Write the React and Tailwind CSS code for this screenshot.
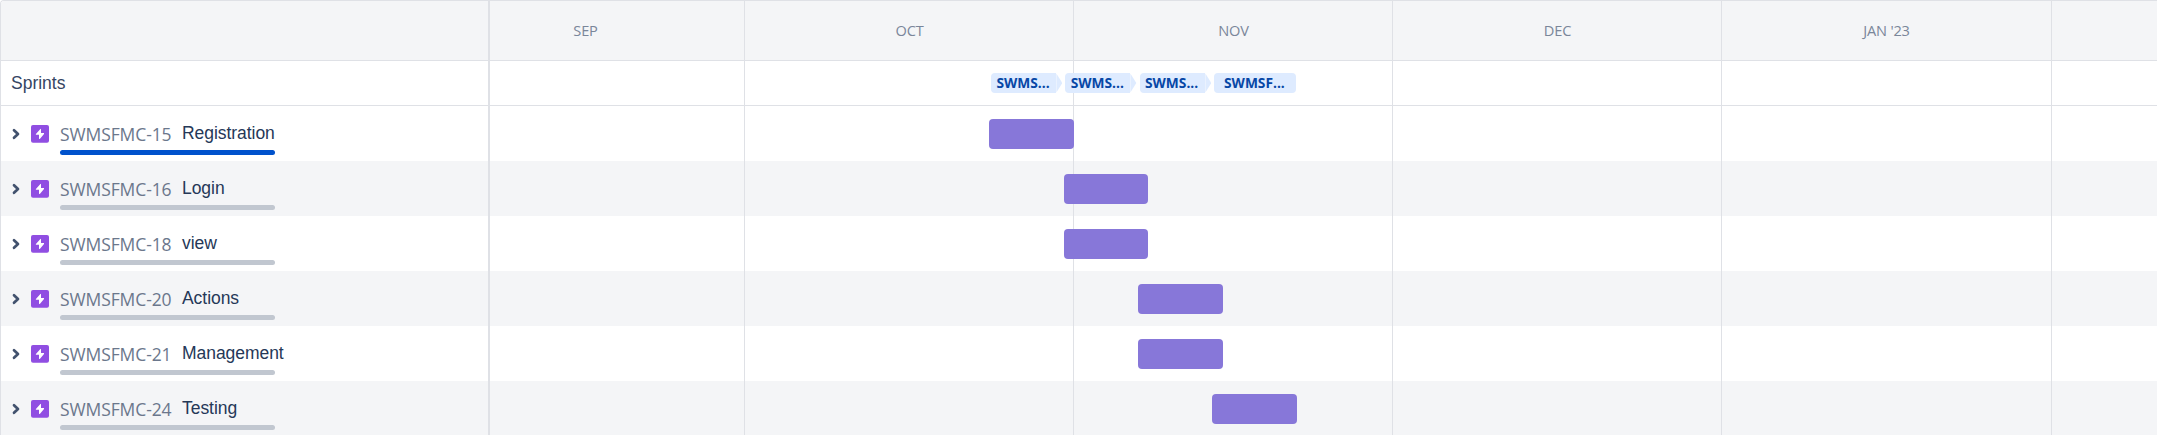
const months = [
  { label: "SEP", cell: "w-[254px]", pad: "pr-[63px]", line: "" },
  { label: "OCT", cell: "w-[329px]", pad: "pl-[2px]", line: "border-l" },
  { label: "NOV", cell: "w-[319px]", pad: "pl-[2px]", line: "border-l" },
  { label: "DEC", cell: "w-[329px]", pad: "pl-[2px]", line: "border-l" },
  { label: "JAN '23", cell: "w-[330px]", pad: "pl-[1px] tracking-[0px]", line: "border-l" },
  { label: "", cell: "w-[106px]", pad: "", line: "border-l" },
];

const epics = [
  { id: "SWMSFMC-15", name: "Registration", offset: "ml-[499.4px]", progress: "bg-[#0052CC]" },
  { id: "SWMSFMC-16", name: "Login", offset: "ml-[573.7px]", progress: "bg-[#C1C7D0]" },
  { id: "SWMSFMC-18", name: "view", offset: "ml-[573.7px]", progress: "bg-[#C1C7D0]" },
  { id: "SWMSFMC-20", name: "Actions", offset: "ml-[648px]", progress: "bg-[#C1C7D0]" },
  { id: "SWMSFMC-21", name: "Management", offset: "ml-[648px]", progress: "bg-[#C1C7D0]" },
  { id: "SWMSFMC-24", name: "Testing", offset: "ml-[722.3px]", progress: "bg-[#C1C7D0]" },
];

const sans = "font-['Liberation_Sans',Arial,sans-serif]";
const humanist = "font-['Open_Sans','Noto_Sans',sans-serif]";

function Chevron() {
  return (
    <svg className="mt-[22px] h-[12px] w-[8px] shrink-0" viewBox="0 0 8 12" fill="none" stroke="#42526E" strokeWidth="2.7" strokeLinecap="round" strokeLinejoin="round">
      <path d="M2 2.2 L6 6 L2 9.8" />
    </svg>
  );
}

function EpicIcon() {
  return (
    <svg className="mt-[19px] ml-[11px] h-[18px] w-[18px] shrink-0" viewBox="0 0 18 18">
      <rect width="18" height="17.7" rx="2" fill="#904EE2" />
      <path d="M9.4 4 L4.9 8.9 Q4.6 9.7 5.3 9.8 H8 V13.6 Q8.2 14.4 8.8 13.9 L13 9 Q13.3 8.2 12.7 8.1 H10 V4.3 Q9.9 3.6 9.4 4 Z" fill="#fff" />
    </svg>
  );
}

function Sprint({ label, last }) {
  if (last) {
    return (
      <div className={`${humanist} flex h-5 w-[82px] items-center justify-center rounded bg-[#DEEBFF] pr-px text-[13.75px] font-bold tracking-[0px] text-[#0747A6]`}>
        {label}
      </div>
    );
  }
  return (
    <div className="mr-[3px] flex h-5">
      <div className={`${humanist} flex w-[65px] items-center justify-center rounded-l bg-[#DEEBFF] pr-px text-[13.75px] font-bold tracking-[0px] text-[#0747A6]`}>
        {label}
      </div>
      <svg className="h-5 w-[6.3px]" viewBox="0 0 6.3 20">
        <path d="M0.4 0.6 L6.3 10 L0.4 19.4 Z" fill="#DEEBFF" />
      </svg>
    </div>
  );
}

export default function App() {
  return (
    <div className="relative h-[435px] w-[2157px] overflow-hidden rounded-tl-[4px] border-t border-l border-[#DFE1E6] bg-white">
      <div className="flex h-[60px] border-b border-[#DFE1E6] bg-[#F4F5F7]">
        <div className="w-[489px] shrink-0" />
        {months.map((m, i) => (
          <div key={i} className={`${humanist} ${m.cell} ${m.pad} flex shrink-0 items-center justify-center text-[14.6px] text-[#7A869A] not-last:tracking-[-0.2px]`}>
            {m.label}
          </div>
        ))}
      </div>

      <div className="flex h-[45px] border-b border-[#DFE1E6]">
        <div className={`${sans} flex w-[489px] shrink-0 items-center pl-[10px] text-[17.5px] text-[#344563]`}>Sprints</div>
        <div className="relative z-10 flex items-center pl-[501px]">
          <Sprint label="SWMS..." />
          <Sprint label="SWMS..." />
          <Sprint label="SWMS..." />
          <Sprint label="SWMSF..." last />
        </div>
      </div>

      <div>
        {epics.map((e) => (
          <div key={e.id} className="flex h-[55px] odd:bg-white even:bg-[#F4F5F7]">
            <div className="flex w-[489px] shrink-0 items-start pl-[11px]">
              <Chevron />
              <EpicIcon />
              <div className="ml-[11px] flex w-[215px] flex-col pt-[14px]">
                <div className="flex h-[30px] items-start whitespace-nowrap">
                  <span className={`${humanist} w-[122px] shrink-0 pt-[2px] text-[17.5px] leading-6 tracking-[-0.1px] text-[#6B778C]`}>{e.id}</span>
                  <span className={`${sans} pt-px text-[17.5px] leading-6 tracking-[-0.05px] text-[#253858]`}>{e.name}</span>
                </div>
                <div className={`h-[5px] rounded-full ${e.progress}`} />
              </div>
            </div>
            <div className={`relative z-10 mt-[13px] h-[29.6px] w-[84.7px] rounded-[4px] bg-[#8777D9] ${e.offset}`} />
          </div>
        ))}
      </div>

      <div className="pointer-events-none absolute inset-y-0 left-[487px] flex">
        <div className="w-[2px] shrink-0 bg-[#DFE1E6]" />
        {months.map((m, i) => (
          <div key={i} className={`shrink-0 border-[#DFE1E6] ${m.cell} ${m.line}`} />
        ))}
      </div>
    </div>
  );
}
